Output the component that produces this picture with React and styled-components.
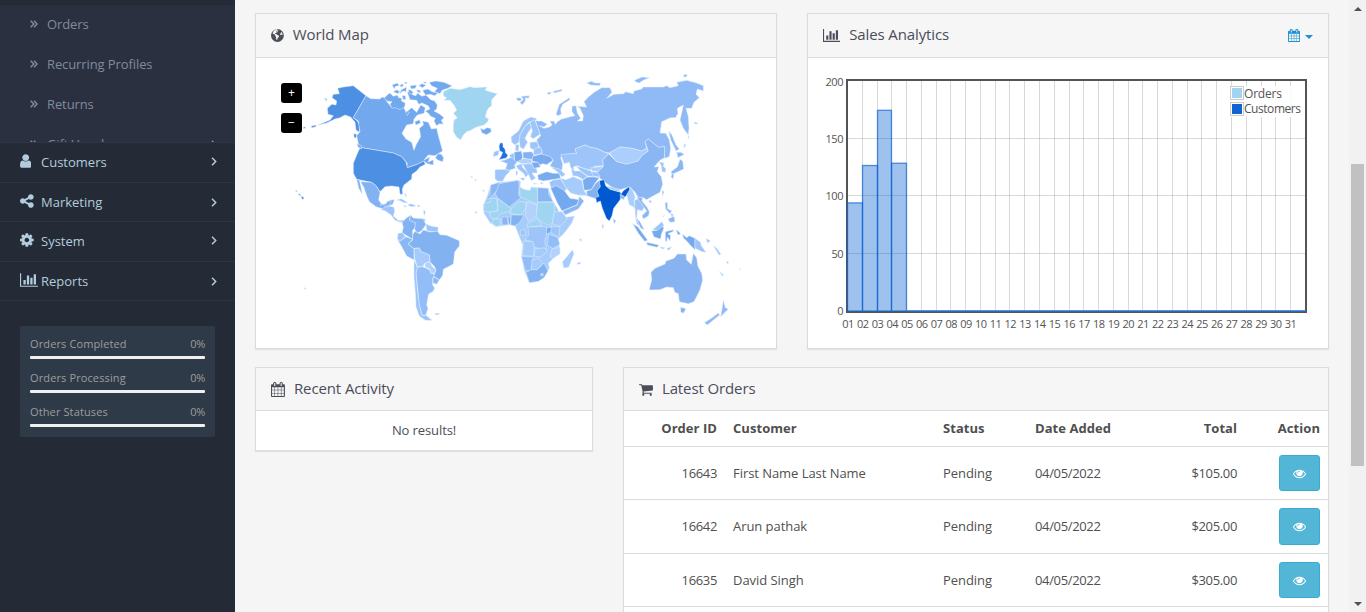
import React from "react";
import styled, { createGlobalStyle } from "styled-components";

const Global = createGlobalStyle`
  * { box-sizing: border-box; }
  html, body { margin: 0; height: 612px; overflow: hidden; }
  body { background: #f5f5f5; color: #4c4d5a; font: 13px/20px "Open Sans", sans-serif; }
`;

/* ---------- icons ---------- */
const PATHS = {
  user: "M1536 1399q0 109-62.5 187t-150.5 78h-854q-88 0-150.5-78t-62.5-187q0-85 8.5-160.5t31.5-152 58.5-131 94-89 134.5-34.5q131 128 313 128t313-128q76 0 134.5 34.5t94 89 58.5 131 31.5 152 8.5 160.5zm-256-887q0 159-112.5 271.5t-271.5 112.5-271.5-112.5-112.5-271.5 112.5-271.5 271.5-112.5 271.5 112.5 112.5 271.5z",
  share: "M1344 1024q133 0 226.5 93.5t93.5 226.5-93.5 226.5-226.5 93.5-226.5-93.5-93.5-226.5q0-12 2-34l-360-180q-92 86-218 86-133 0-226.5-93.5t-93.5-226.5 93.5-226.5 226.5-93.5q126 0 218 86l360-180q-2-22-2-34 0-133 93.5-226.5t226.5-93.5 226.5 93.5 93.5 226.5-93.5 226.5-226.5 93.5q-126 0-218-86l-360 180q2 22 2 34t-2 34l360 180q92-86 218-86z",
  cog: "M1152 896q0-106-75-181t-181-75-181 75-75 181 75 181 181 75 181-75 75-181zm512-109v222q0 12-8 23t-20 13l-185 28q-19 54-39 91 35 50 107 138 10 12 10 25t-9 23q-27 37-99 108t-94 71q-12 0-26-9l-138-108q-44 23-91 38-16 136-29 186-7 28-36 28h-222q-14 0-24.5-8.5t-11.5-21.5l-28-184q-49-16-90-37l-141 107q-10 9-25 9-14 0-25-11-126-114-165-168-7-10-7-23 0-12 8-23 15-21 51-66.5t54-70.5q-27-50-41-99l-183-27q-13-2-21-12.5t-8-23.5v-222q0-12 8-23t19-13l186-28q14-46 39-92-40-57-107-138-10-12-10-24 0-10 9-23 26-36 98.5-107.5t94.5-71.5q13 0 26 10l138 107q44-23 91-38 16-136 29-186 7-28 36-28h222q14 0 24.5 8.5t11.5 21.5l28 184q49 16 90 37l142-107q9-9 24-9 13 0 25 10 129 119 165 170 7 8 7 22 0 12-8 23-15 21-51 66.5t-54 70.5q26 50 41 98l183 28q13 2 21 12.5t8 23.5z",
  chart: "M640 896v512h-256v-512h256zm384-512v1024h-256v-1024h256zm1024 1152v128h-2048v-1536h128v1408h1920zm-640-896v768h-256v-768h256zm384-384v1152h-256v-1152h256z",
  eye: "M1664 960q-152-236-381-353 61 104 61 225 0 185-131.5 316.5t-316.5 131.5-316.5-131.5-131.5-316.5q0-121 61-225-229 117-381 353 133 205 333.5 326.5t434.5 121.5 434.5-121.5 333.5-326.5zm-720-384q0-20-14-34t-34-14q-125 0-214.5 89.5t-89.5 214.5q0 20 14 34t34 14 34-14 14-34q0-86 61-147t147-61q20 0 34-14t14-34zm848 384q0 34-20 69-140 230-376.5 368.5t-499.5 138.5-499.5-139-376.5-368q-20-35-20-69t20-69q140-229 376.5-368t499.5-139 499.5 139 376.5 368q20 35 20 69z",
  cart: "M704 1536q0 52-38 90t-90 38-90-38-38-90 38-90 90-38 90 38 38 90zm896 0q0 52-38 90t-90 38-90-38-38-90 38-90 90-38 90 38 38 90zm128-1088v512q0 24-16.5 42.5t-40.5 21.5l-1044 122q13 60 13 70 0 16-24 64h920q26 0 45 19t19 45-19 45-45 19h-1024q-26 0-45-19t-19-45q0-11 8-31.5t16-36 21.5-40 15.5-29.5l-177-823h-204q-26 0-45-19t-19-45 19-45 45-19h256q16 0 28.5 6.5t19.5 15.5 13 24.5 8 26 5.5 29.5 4.5 26h1201q26 0 45 19t19 45z",
  calendar: "M192 1664h288v-288h-288v288zm352 0h320v-288h-320v288zm-352-352h288v-320h-288v320zm352 0h320v-320h-320v320zm-352-384h288v-288h-288v288zm736 736h320v-288h-320v288zm-384-736h320v-288h-320v288zm768 736h288v-288h-288v288zm-384-352h320v-320h-320v320zm-352-864v-288q0-13-9.5-22.5t-22.5-9.5h-64q-13 0-22.5 9.5t-9.5 22.5v288q0 13 9.5 22.5t22.5 9.5h64q13 0 22.5-9.5t9.5-22.5zm736 864h288v-320h-288v320zm-384-384h320v-288h-320v288zm384 0h288v-288h-288v288zm32-480v-288q0-13-9.5-22.5t-22.5-9.5h-64q-13 0-22.5 9.5t-9.5 22.5v288q0 13 9.5 22.5t22.5 9.5h64q13 0 22.5-9.5t9.5-22.5zm384-64v1280q0 52-38 90t-90 38h-1408q-52 0-90-38t-38-90v-1280q0-52 38-90t90-38h128v-96q0-66 47-113t113-47h64q66 0 113 47t47 113v96h384v-96q0-66 47-113t113-47h64q66 0 113 47t47 113v96h128q52 0 90 38t38 90z",
  globe: "M896 128a768 768 0 1 0 0 1536a768 768 0 1 0 0-1536zM1010 250l-80 70-90-20-100 80 20 60 90-50 110 30-50 90-120 10-50 80-110 20 0 100 130 10 70 90 170 40 90 120-60 130-100 90-40 180-90 40-70-180 10-150-110-130 10-110-110-100-90-20-130-80a650 650 0 0 1 450-490zM1340 480l120 110 60 190-50 70-90-60-70 90-90-70 40-140z",
};
// left edge and width of each glyph on its 1792-unit grid
const BOXES = {
  user: [256, 1280],
  share: [128, 1536],
  cog: [128, 1536],
  globe: [128, 1536],
  calendar: [64, 1664],
  cart: [64, 1664],
  eye: [0, 1792],
  chart: [0, 2048],
};
const IconSvg = styled.svg`
  display: block;
  flex: none;
  fill: currentColor;
`;
const Icon = ({ name, size = 14 }) => {
  const [left, wide] = BOXES[name];
  return (
    <IconSvg viewBox={`${left} 0 ${wide} 1792`} width={(size * wide) / 1792} height={size}>
      <path fillRule="evenodd" d={PATHS[name]} />
    </IconSvg>
  );
};
const Stroke = styled.svg`
  display: block;
  flex: none;
  fill: none;
  stroke: currentColor;
  stroke-width: 1.5;
`;
const Angle = () => <Stroke width="6" height="9"><path d="M1 .8L4.7 4.5 1 8.2" /></Stroke>;
const DoubleAngle = () => <Stroke width="8" height="8"><path d="M.7.8L3.7 4 .7 7.2M4 .8L7 4 4 7.2" /></Stroke>;

/* ---------- sidebar ---------- */
const Page = styled.div`
  display: flex;
  height: 612px;
  overflow: hidden;
`;
const Sidebar = styled.aside`
  width: 235px;
  flex: none;
  padding-top: 5px;
  background: #242b36;
`;
const SubMenu = styled.div`
  height: 138px;
  overflow: hidden;
  background: #2a3040;
  border-bottom: 1px solid #2b3843;
`;
const SubItem = styled.div`
  display: flex;
  align-items: center;
  height: 40px;
  padding: 0 18px 2px 30px;
  color: #808b9c;
  letter-spacing: -0.1px;
`;
const SubLabel = styled.span`
  flex: 1;
  margin-left: 9px;
`;
const MenuItem = styled.div`
  display: flex;
  align-items: center;
  height: ${(p) => p.$h}px;
  padding: 0 18px ${(p) => p.$lift}px 20px;
  border-bottom: 1px solid #2b3843;
  color: #b3cbdd;
`;
const MenuIcon = styled.span`
  width: 21px;
  margin-top: -2px;
`;
const MenuLabel = styled.span`
  flex: 1;
`;
const Stats = styled.div`
  width: 195px;
  height: 111px;
  margin: 25px 20px 0;
  padding: 8px 10px;
  border-radius: 2px;
  background: #2e3a47;
`;
const Stat = styled.div`
  height: 34px;
  color: #9d9d9d;
  font-size: 11px;
  line-height: 20px;
  letter-spacing: 0.12px;
`;
const StatHead = styled.div`
  display: flex;
  justify-content: space-between;
  height: 22px;
`;
const Percent = styled.span`
  letter-spacing: -0.3px;
`;
const StatBar = styled.div`
  height: 3px;
  border-radius: 1px;
  background: #f0f0f0;
`;

/* ---------- content ---------- */
const Main = styled.main`
  flex: 1;
  padding: 13px 20px 0;
`;
const Row = styled.div`
  display: flex;
  align-items: flex-start;
  gap: 30px;
  margin-bottom: 18px;
`;
const Panel = styled.section`
  width: ${(p) => p.$w}px;
  height: ${(p) => p.$h}px;
  flex: none;
  border: 1px solid #dcdcdc;
  background: #fff;
  box-shadow: 0 1px 1px rgba(0, 0, 0, 0.07);
`;
const Heading = styled.header`
  display: flex;
  align-items: center;
  height: ${(p) => p.$h || 43}px;
  padding: 0 15px;
  background: #f6f6f6;
  border-bottom: 1px solid #dcdcdc;
`;
const Title = styled.h3`
  flex: 1;
  margin: 0 0 ${(p) => p.$lift || 2}px 9px;
  font-size: 15px;
  font-weight: 400;
  letter-spacing: -0.11px;
`;
const DateMenu = styled.button`
  display: flex;
  align-items: center;
  gap: 5px;
  padding: 0;
  border: 0;
  background: none;
  color: #1e91cf;
`;
const Caret = styled.i`
  margin-top: 2px;
  border: 4px solid transparent;
  border-top-color: currentColor;
  border-bottom: 0;
`;
const MapBody = styled.div`
  position: relative;
  height: 290px;
`;
const Zoom = styled.div`
  position: absolute;
  left: 25px;
  top: 25px;
  display: grid;
  gap: 10px;
`;
const ZoomButton = styled.button`
  width: 21px;
  height: 20px;
  padding: 0;
  border: 0;
  border-radius: 3px;
  background: #000;
  color: #fff;
  font: 12px/20px "Open Sans", sans-serif;
`;
const Empty = styled.div`
  padding-top: 9px;
  text-align: center;
  letter-spacing: -0.1px;
`;
const Table = styled.div`
  color: #4f4f4f;
`;
const TableRow = styled.div`
  display: grid;
  grid-template-columns: 101px 210px 92px 122px 96px 83px;
  align-items: center;
  height: ${(p) => p.$h}px;
  padding-bottom: ${(p) => p.$lift || 0}px;
  border-bottom: 1px solid #dcdcdc;
  font-weight: ${(p) => (p.$head ? 700 : 400)};
  letter-spacing: ${(p) => (p.$head ? 0.05 : -0.05)}px;
`;
const Cell = styled.div`
  padding: 0 8px;
  display: flex;
  justify-content: ${(p) => (p.$right ? "flex-end" : "flex-start")};
  letter-spacing: ${(p) => (p.$num ? "-0.35px" : "inherit")};
`;
const View = styled.button`
  display: flex;
  align-items: center;
  justify-content: center;
  width: 41px;
  height: ${(p) => p.$h}px;
  padding: 0;
  border: 1px solid #39add1;
  border-radius: 3px;
  background: #54b6d6;
  color: #fff;
`;
const Scrollbar = styled.div`
  display: flex;
  flex-direction: column;
  align-items: center;
  width: 17px;
  flex: none;
  padding: 7px 0 6px;
  background: #f1f1f1;
`;
const Arrow = styled.i`
  border: 4px solid transparent;
  ${(p) => (p.$up ? "border-bottom-color: #505050; border-top: 0;" : "border-top-color: #505050; border-bottom: 0; margin-top: auto;")}
`;
const Thumb = styled.div`
  width: 13px;
  height: 302px;
  margin-top: 153px;
  background: #c1c1c1;
`;

/* ---------- world map ---------- */
// North America, thirds of a pixel from (300, 65)
const NORTH_AMERICA = [
  ["#4d8fe2", "113,70 130,66 160,62 198,92 160,158 172,168 178,180 178,202 168,195 165,172 152,156 135,150 120,158 105,162 80,174 52,181 90,165 100,152 84,148 82,130 95,118 108,120 110,108 96,98 100,88 118,86"],
  ["#72a8ee", "198,92 212,101 240,102 246,96 255,98 262,112 274,126 290,124 298,132 310,125 318,142 335,128 350,142 362,120 376,128 372,145 352,150 342,162 340,176 320,180 306,205 318,222 335,232 342,256 348,240 362,215 358,190 370,180 368,168 385,172 394,192 410,190 416,215 428,258 405,272 385,270 372,285 390,276 384,292 400,284 400,300 382,296 372,288 352,298 320,308 322,295 305,275 280,264 185,248 176,240 170,212 180,200 175,168 160,158"],
  ["#72a8ee", "252,100 264,88 270,84 280,94 292,90 296,98 306,100 304,108 316,114 314,126 300,134 286,128 276,130 270,118 276,110 262,108"],
  ["#72a8ee", "322,82 332,78 338,90 348,92 352,84 366,94 378,90 392,104 404,108 412,120 410,132 402,138 420,148 432,158 424,166 430,178 418,176 410,182 402,168 406,160 392,154 386,146 376,138 390,132 384,122 366,114 356,118 350,106 330,104"],
  ["#72a8ee", "388,52 408,48 432,52 456,62 444,70 426,76 420,86 404,80 412,70 394,62"],
  ["#72a8ee", "368,76 384,72 396,80 414,84 404,92 390,88 376,90"],
  ["#72a8ee", "276,60 292,54 298,62 286,64 284,72"], ["#72a8ee", "280,80 290,74 300,80 292,86"],
  ["#72a8ee", "304,74 320,66 318,80 308,78 298,88"], ["#72a8ee", "300,60 308,56 310,64 302,66"],
  ["#72a8ee", "330,62 350,60 346,70 334,72"], ["#72a8ee", "324,74 334,76 340,84 330,88"], ["#72a8ee", "356,62 366,56 378,60 368,68"],
  ["#72a8ee", "314,52 322,52 320,56 314,56"], ["#72a8ee", "370,50 380,52 376,56"], ["#72a8ee", "350,74 360,76 362,84 352,80"],
  ["#72a8ee", "306,92 316,92 318,102 310,104"], ["#72a8ee", "344,170 358,164 362,174 348,180"], ["#72a8ee", "316,138 328,142 322,152"],
  ["#72a8ee", "406,278 414,266 424,268 431,278 428,290 414,286"],
  ["#4d8fe2", "178,252 185,248 280,264 305,275 318,292 322,308 352,298 372,288 376,298 360,306 350,318 336,328 335,342 312,360 307,372 308,388 300,388 297,366 275,363 255,365 240,380 228,362 215,352 170,343 160,325 160,295 170,270"],
  ["#4d8fe2", "3,394 10,395 12,402 6,403"], ["#4d8fe2", "-14,378 -10,376 -8,380"], ["#4d8fe2", "-5,386 1,388 1,393 -3,391"], ["#4d8fe2", "72,99 80,102 81,109"],
  ["#4d8fe2", "34,183 48,180 48,185 35,188"], ["#4d8fe2", "10,186 16,186 16,190 10,190"],
  ["#4d8fe2", "161,206 170,208 168,220 162,216"], ["#72a8ee", "170,236 184,242 184,252 174,246"],
  ["#83b2f2", "170,343 178,345 182,362 187,388 176,370"],
  ["#83b2f2", "182,350 215,352 228,362 240,382 236,405 245,418 262,416 270,405 283,404 278,418 262,425 250,432 228,425 208,410 200,392 192,368"],
  ["#9fd5f1", "430,80 450,70 480,74 510,65 525,68 560,66 556,76 570,80 592,86 575,104 575,122 565,130 560,140 556,156 566,162 563,170 552,180 530,186 512,196 500,200 490,210 482,225 470,217 460,200 460,180 462,165 472,158 460,145 470,136 462,120 450,106 432,106 440,98 430,92"],
  ["#74a9ee", "541,190 552,194 560,188 572,190 574,200 560,209 546,204"],
];
// South America, thirds of a pixel from (380, 190)
const SOUTH_AMERICA = [
  ["#83b2f2", "0,45 12,44 16,50 28,46 34,32 22,34 18,42 4,42"],
  ["#9dc4fa", "14,52 28,48 42,52 44,64 40,78 56,92 70,90 76,96 58,96 44,90 34,76 18,64 2,58"],
  ["#9dc4fa", "50,30 64,26 84,38 72,38 60,32"], ["#9dc4fa", "86,42 96,42 108,48 98,50 86,48"],
  ["#9dc4fa", "70,46 79,48 76,52"], ["#9dc4fa", "112,46 119,46 119,50 113,50"], ["#9dc4fa", "131,60 136,64 134,76 131,72"], ["#9dc4fa", "130,87 136,87 136,93 131,93"],
  ["#9dc4fa", "74,10 78,12 80,20 77,20"],
  ["#83b2f2", "78,85 92,75 88,90 108,98 104,115 98,120 98,148 82,138 66,128 70,112 66,98"],
  ["#88b6f4", "92,75 100,84 130,86 138,104 125,122 112,130 104,118 106,98 88,92"],
  ["#9dc4fa", "138,102 152,108 175,112 173,126 150,124 140,122"],
  ["#83b2f0", "98,135 104,124 120,132 130,120 150,126 173,124 180,134 200,136 238,152 238,168 224,186 220,222 205,230 190,238 188,256 178,270 160,258 168,242 164,230 150,215 148,195 122,184 118,174 100,175 84,162 98,150"],
  ["#9dc4fa", "54,130 68,128 76,140 60,154 52,146"],
  ["#8ab8f5", "52,148 60,154 78,140 98,148 84,162 102,176 102,210 80,198 66,172"],
  ["#a6cafb", "102,176 118,174 122,184 148,195 150,214 134,220 128,230 112,230 104,206"],
  ["#b2d2fc", "134,220 150,215 156,228 168,240 164,250 152,250 150,238 136,232"],
  ["#8ab8f5", "160,260 178,270 170,283 158,278"],
  ["#92bdf8", "112,232 128,230 150,240 152,250 164,252 158,266 158,285 164,294 160,304 146,312 144,322 140,345 144,355 138,375 126,375 118,345 112,290 108,250"],
  ["#9dc4fa", "102,210 112,232 108,250 112,300 118,345 126,376 138,376 156,391 136,391 118,378 108,350 107,320 102,260"],
  ["#9dc4fa", "165,370 178,370 176,374 166,374"],
];
// Eastern hemisphere, thirds of a pixel from (470, 65)
const EAST = [
  ["#8fbaf5", "197,168 215,168 232,178 222,186 208,182 222,190 238,186 246,180 240,168 252,168 256,178 262,170 275,162 290,158 300,155 315,152 306,140 306,124 318,122 322,144 332,160 322,168 338,168 340,152 330,130 322,124 350,126 342,110 355,96 375,80 395,68 420,68 426,82 410,100 432,88 462,86 466,80 490,86 492,78 515,72 520,66 580,66 590,62 600,68 625,62 620,52 650,46 680,54 700,62 700,78 682,72 678,88 688,98 672,112 665,130 648,130 655,155 657,190 655,210 640,190 630,165 636,140 640,120 622,130 624,146 616,158 602,158 575,170 570,204 588,205 598,225 602,250 598,275 583,280 584,245 565,247 535,222 525,230 530,250 515,258 485,250 450,246 418,264 405,262 380,250 365,248 345,240 315,252 320,265 280,270 272,278 278,296 276,316 262,314 240,302 250,285 240,275 215,268 216,256 205,240 200,225 212,212 204,190"],
  ["#8fbaf5", "258,148 268,118 298,98 300,104 278,118 272,132 274,148 264,152"],
  ["#8fbaf5", "138,100 150,98 156,104 148,108 142,106"], ["#8fbaf5", "154,94 178,92 176,100 166,98 166,108 156,120 150,112 160,104"],
  ["#8fbaf5", "232,82 244,82 240,88 234,88"],
  ["#8fbaf5", "250,79 276,73 276,78 252,84"], ["#8fbaf5", "350,54 364,49 376,54 392,54 388,62 362,60"],
  ["#8fbaf5", "493,46 516,36 538,38 520,46 508,54 500,52"], ["#8fbaf5", "640,30 651,28 651,34 642,37"],
  ["#8fbaf5", "596,198 606,210 618,240 628,252 618,258 602,224"], ["#8fbaf5", "672,172 682,173 682,177 674,176"],
  ["#8fbaf5", "654,212 657,216 654,222"], ["#8fbaf5", "644,236 648,240 640,250"],
  ["#9ec5fa", "272,268 320,265 315,252 345,240 365,248 380,250 405,262 416,266 398,285 400,302 375,304 362,315 340,310 322,302 310,306 314,318 302,308 298,292 282,296"],
  ["#aacffc", "418,264 450,246 485,250 515,258 530,250 535,258 515,272 505,288 470,298 440,290"],
  ["#8ab6f3", "416,266 440,290 470,298 505,288 515,272 535,258 525,230 535,222 565,247 584,245 583,278 570,286 552,306 566,305 562,320 574,335 578,358 570,382 545,395 530,404 520,398 505,398 494,380 478,366 450,374 430,370 405,352 390,340 376,326 400,304 398,285"],
  ["#9ec5fa", "568,290 582,294 580,304 588,312 586,322 576,320 574,304"],
  ["#8ab6f3", "630,283 638,288 641,312 624,320 606,328 603,320 622,306"], ["#8ab6f3", "620,262 632,262 643,268 624,278"], ["#8ab6f3", "606,326 612,328 609,342 603,336"],
  ["#8ab6f3", "576,376 582,380 578,394"], ["#8ab6f3", "536,406 545,408 540,415"],
  ["#9ec5fa", "304,310 314,318 330,318 352,334 340,344 322,334 308,332"],
  ["#9ec5fa", "318,304 340,310 362,318 380,330 370,336 352,332 332,318"],
  ["#aacffc", "362,308 400,304 384,320 366,318"], ["#9ec5fa", "364,320 384,322 390,336 370,334"],
  ["#78abef", "338,346 352,336 372,336 388,338 374,356 364,374 342,376"],
  ["#83b2f2", "350,378 364,374 376,356 388,346 392,365 382,378 388,394 380,402 350,392"],
  ["#a6ccfb", "272,340 288,344 310,335 336,346 342,376 352,392 322,390 302,384 286,366"],
  ["#9ec5fa", "242,306 268,312 286,328 276,336 262,320"],
  ["#78abef", "203,330 230,320 250,325 268,325 272,340 240,345 220,348 205,344"],
  ["#9ec5fa", "238,352 250,345 272,342 290,372 282,380 258,364 244,372"],
  ["#74a9ee", "242,370 258,362 282,376 300,400 328,404 320,420 285,434 276,438 262,414"],
  ["#8ab6f3", "278,438 322,420 328,394 342,408 325,432 285,450"],
  ["#0059d1", "388,347 402,344 407,362 420,373 450,381 454,386 460,377 477,365 481,376 465,397 456,390 450,405 431,430 426,453 418,468 409,460 397,430 391,408 380,413 377,398 387,394 381,378 391,365"],
  ["#a6ccfb", "408,362 450,374 448,380 420,372"], ["#8ab6f3", "450,386 464,396 462,404 452,400"],
  ["#8ab6f3", "430,460 438,468 432,476"],
  ["#aacffc", "470,390 482,368 490,380 496,398 492,408 500,440 490,425 478,420"],
  ["#9ec5fa", "494,406 508,400 524,426 516,438 502,434 500,462 508,482 500,476 496,452"],
  ["#8ab6f3", "500,396 518,398 516,408 532,428 538,440 536,452 520,462 516,452 530,438 512,412"],
  ["#74a9ee", "488,476 504,486 533,526 524,529 506,506"], ["#8ab6f3", "498,458 510,470 523,494 512,490"],
  ["#74a9ee", "530,532 566,540 562,547 532,540"], ["#9ec5fa", "570,545 584,548 578,553"], ["#9ec5fa", "590,550 606,546 596,556"],
  ["#74a9ee", "545,498 560,496 574,482 582,488 574,508 572,522 552,516"], ["#9ec5fa", "548,494 576,470 582,482 562,496"],
  ["#74a9ee", "586,500 610,494 610,499 594,506 602,512 600,528 592,516 590,530 586,528"],
  ["#74a9ee", "618,494 624,498 632,506 624,510"], ["#8ab6f3", "585,412 593,414 592,430 600,436 606,436 600,446 587,432"], ["#8ab6f3", "594,462 612,454 615,470 600,472"],
  ["#8ab6f3", "602,446 610,448 606,456"], ["#8ab6f3", "584,448 580,456 578,456"],
  ["#74a9ee", "638,508 650,518 658,512 675,520 675,554 664,544 652,530 640,518"],
  ["#9ec5fa", "675,520 692,532 694,542 708,562 696,560 675,550"], ["#9ec5fa", "708,520 722,528 712,534"], ["#9ec5fa", "730,542 740,550 753,568 747,570"],
  ["#9fd5f1", "748,619 761,630 757,634"], ["#9ec5fa", "768,588 776,592 773,597"], ["#9ec5fa", "808,611 812,611 812,616"],
  ["#87b4f1", "540,675 538,672 545,645 543,622 555,610 585,597 588,588 612,580 622,567 648,567 650,585 664,598 670,565 680,578 684,604 695,625 698,645 690,675 672,710 655,716 628,710 625,686 614,682 610,668 590,666 570,674"],
  ["#87b4f1", "632,727 648,731 640,745 632,741"],
  ["#8fbaf5", "760,705 766,728 775,732 752,755 756,732"], ["#8fbaf5", "745,744 749,750 728,767 712,780 703,773 725,759"],
  ["#9ec5fa", "123,216 146,197 160,168 182,156 198,160 200,166 176,172 164,186 150,210 148,230 135,240 125,232"],
  ["#9ec5fa", "150,210 165,184 180,172 184,188 173,205 165,220 173,232 160,253 150,246 148,226"],
  ["#9ec5fa", "180,172 194,164 204,190 210,208 190,221 181,215 187,198"],
  ["#9ec5fa", "137,239 147,239 146,258 136,257"],
  ["#1f6fdc", "91,233 99,235 99,246 105,252 107,264 114,270 109,279 87,284 94,272 98,262 89,258 87,244"],
  ["#9ec5fa", "72,261 87,255 85,271 69,275"],
  ["#8fbaf5", "104,285 128,275 142,290 134,300 136,310 118,316 106,312 112,296 91,288"],
  ["#9ec5fa", "75,314 108,313 121,318 107,332 98,349 84,349 75,342"],
  ["#78abef", "132,262 154,258 158,276 152,292 134,288"], ["#9ec5fa", "118,270 132,264 134,284 120,276"],
  ["#83b2f2", "158,262 186,260 192,272 186,284 160,280"],
  ["#78abef", "188,274 214,267 240,274 249,286 230,299 218,296 210,300 200,292 186,288"],
  ["#9ec5fa", "192,250 210,246 218,262 208,268 190,270"], ["#9ec5fa", "180,232 202,230 206,246 190,254 180,248"],
  ["#9ec5fa", "138,302 156,296 157,307 177,326 167,337 162,326 144,312"],
  ["#b2d2fc", "142,290 162,280 186,284 184,296 156,296"],
  ["#9ec5fa", "158,298 184,296 200,312 202,324 186,324 197,340 184,347 172,322"],
  ["#78abef", "184,292 204,292 212,306 192,310"], ["#9ec5fa", "149,339 165,339 160,347"], ["#9ec5fa", "138,318 143,318 142,330 138,330"],
  ["#9ec5fa", "210,354 220,352 216,358"], ["#9ec5fa", "190,354 202,356 194,358"],
  // Africa
  ["#a6ccfb", "62,360 88,352 145,346 152,350 150,365 165,375 180,376 184,366 235,370 248,408 262,430 275,458 314,453 305,475 285,502 265,522 270,565 250,580 235,595 238,610 218,640 205,649 178,653 162,615 155,570 158,540 142,500 136,484 120,479 78,485 60,473 42,445 40,420 50,398"],
  ["#8ab6f3", "62,360 88,352 90,368 74,384 58,400 48,402 60,388"],
  ["#8ab6f3", "88,356 145,346 148,362 146,388 152,398 118,426 82,398 76,386"],
  ["#9fd5f1", "147,366 165,374 180,376 184,366 202,370 203,418 150,396"],
  ["#8ab6f3", "203,368 235,370 236,388 250,410 203,411"],
  ["#9fd5f1", "42,415 60,412 62,400 80,400 84,438 58,442 40,436"],
  ["#9fd5f1", "82,400 124,430 118,440 92,446 78,462 62,458 58,442 84,438"],
  ["#9fd5f1", "124,430 148,408 168,412 168,428 154,450 120,446"],
  ["#b2d2fc", "170,410 202,420 200,454 174,470 166,448"],
  ["#9fd5f1", "203,412 252,412 254,442 244,484 220,474 198,456"],
  ["#83b2f2", "124,450 162,450 148,474 134,482 122,480"], ["#9fd5f1", "72,462 92,462 92,482 78,484 66,474"],
  ["#78abef", "114,460 122,454 120,478 116,478"], ["#8ab6f3", "96,456 112,456 114,479 96,480"],
  ["#9fd5f1", "170,478 202,460 216,480 196,484 172,488"],
  ["#9ec5fa", "174,486 228,484 232,500 224,530 230,550 210,552 192,546 188,530 164,524 176,510"],
  ["#9ec5fa", "150,498 164,492 168,510 152,512"],
  ["#a6ccfb", "160,528 188,530 194,548 190,574 158,572"], ["#a6ccfb", "194,552 224,548 232,558 214,576 194,574"],
  ["#92bdf8", "154,574 190,576 184,616 166,618"], ["#a6ccfb", "186,584 206,580 220,594 202,614 184,614"],
  ["#83b2f2", "168,622 184,614 202,614 222,594 234,618 222,638 205,649 178,653"],
  ["#b2d2fc", "211,628 217,624 221,630 215,634"],
  ["#a6ccfb", "254,440 276,440 292,462 270,484 246,476"], ["#9ec5fa", "246,484 270,486 266,518 240,500"],
  ["#78abef", "230,488 246,488 240,504 230,506"], ["#92bdf8", "236,508 262,516 270,538 248,550 232,540"],
  ["#b2d2fc", "246,552 270,546 270,566 250,580 240,576"],
  ["#a6ccfb", "307,554 312,566 296,607 281,609 277,590 290,576"],
  ["#9fd5f1", "327,524 334,520 334,530"], ["#9ec5fa", "320,597 326,592 334,592 328,598"], ["#9ec5fa", "396,479 400,479 401,489 397,489"],
  ["#9ec5fa", "2,333 8,336 6,340"], ["#9ec5fa", "14,342 20,345 15,348"], ["#9ec5fa", "37,376 44,376 42,381"], ["#9ec5fa", "15,437 21,443 17,447"],
  ["#9ec5fa", "-498,667 -491,672 -496,673"],
];
const Land = ({ x, y, shapes }) => (
  <g transform={`translate(${x} ${y}) scale(.33333)`} stroke="#e2effd" strokeWidth="1.5" strokeLinejoin="round">
    {shapes.map(([fill, points], i) => <polygon key={i} fill={fill} points={points} />)}
  </g>
);
const WorldMap = () => (
  <svg width="520" height="290" viewBox="256 58 520 290">
    <Land x={300} y={65} shapes={NORTH_AMERICA} />
    <Land x={380} y={190} shapes={SOUTH_AMERICA} />
    <Land x={470} y={65} shapes={EAST} />
  </svg>
);

/* ---------- sales chart ---------- */
const ChartText = styled.text`
  font: 11px "Open Sans", sans-serif;
  fill: #545454;
`;
const LegendText = styled(ChartText)`
  font-size: 12px;
`;
const VALUES = [94, 126.5, 174.5, 128.5];
const tick = (i) => Math.round(847 + i * 14.77) + 0.5;
const level = (v) => Math.round(311 - v * 1.15) - 0.5;
const SalesChart = () => (
  <svg width="520" height="290" viewBox="808 58 520 290">
    <g stroke="#545454" strokeOpacity=".22">
      {Array.from({ length: 30 }, (_, i) => <path key={i} d={`M${tick(i + 1)} 81V311`} />)}
      {[50, 100, 150].map((v) => <path key={v} d={`M848 ${level(v)}H1306`} />)}
    </g>
    <rect x="847" y="80" width="459" height="232" fill="none" stroke="#545454" strokeWidth="2" />
    {VALUES.map((v, i) => (
      <rect key={i} x={tick(i)} y={311 - v * 1.15} width={tick(i + 1) - tick(i)} height={v * 1.15} fill="#1065d2" fillOpacity=".4" stroke="#1065d2" strokeOpacity=".7" strokeWidth="1.3" />
    ))}
    <path d="M907 311H1306" stroke="#1f6fd6" strokeOpacity=".75" strokeWidth="2" />
    {[0, 50, 100, 150, 200].map((v) => (
      <ChartText key={v} x="843.5" y={level(v) + (v === 200 ? 5.5 : 4.5)} textAnchor="end" textLength={String(v).length * 6}>{v}</ChartText>
    ))}
    {Array.from({ length: 31 }, (_, i) => (
      <ChartText key={i} x={848.3 + i * 14.75} y="328" textAnchor="middle" textLength="12">{String(i + 1).padStart(2, "0")}</ChartText>
    ))}
    <rect x="1230" y="86" width="74" height="31" fill="#fff" fillOpacity=".85" />
    <rect x="1230.5" y="86.5" width="13" height="13" fill="#fff" stroke="#ccc" />
    <rect x="1232" y="88" width="10" height="10" fill="#9fd5f1" />
    <rect x="1230.5" y="102.5" width="13" height="13" fill="#fff" stroke="#ccc" />
    <rect x="1232" y="104" width="10" height="10" fill="#1065d2" />
    <LegendText x="1244" y="98" textLength="38">Orders</LegendText>
    <LegendText x="1244" y="113" textLength="57">Customers</LegendText>
  </svg>
);

const MENU = [
  ["user", "Customers", 40, 2],
  ["share", "Marketing", 39, 0],
  ["cog", "System", 40, 2],
  ["chart", "Reports", 39, 0],
];
const ORDERS = [
  ["16643", "First Name Last Name", "$105.00", 53, 0, 36],
  ["16642", "Arun pathak", "$205.00", 54, 1, 37],
  ["16635", "David Singh", "$305.00", 53, 0, 36],
];

export default function App() {
  return (
    <Page>
      <Global />
      <Sidebar>
        <SubMenu>
          {["Orders", "Recurring Profiles", "Returns", "Gift Vouchers"].map((t, i) => (
            <SubItem key={t}>
              <DoubleAngle />
              <SubLabel>{t}</SubLabel>
              {i === 3 && <Angle />}
            </SubItem>
          ))}
        </SubMenu>
        {MENU.map(([icon, label, h, lift]) => (
          <MenuItem key={label} $h={h} $lift={lift}>
            <MenuIcon><Icon name={icon} size={16} /></MenuIcon>
            <MenuLabel>{label}</MenuLabel>
            <Angle />
          </MenuItem>
        ))}
        <Stats>
          {["Orders Completed", "Orders Processing", "Other Statuses"].map((t) => (
            <Stat key={t}>
              <StatHead><span>{t}</span><Percent>0%</Percent></StatHead>
              <StatBar />
            </Stat>
          ))}
        </Stats>
      </Sidebar>
      <Main>
        <Row>
          <Panel $w={522} $h={336}>
            <Heading $h={44}><Icon name="globe" size={15} /><Title $lift={4}>World Map</Title></Heading>
            <MapBody>
              <WorldMap />
              <Zoom><ZoomButton>+</ZoomButton><ZoomButton>−</ZoomButton></Zoom>
            </MapBody>
          </Panel>
          <Panel $w={522} $h={336}>
            <Heading $h={44}>
              <Icon name="chart" size={15} />
              <Title $lift={4}>Sales Analytics</Title>
              <DateMenu><Icon name="calendar" size={13} /><Caret /></DateMenu>
            </Heading>
            <SalesChart />
          </Panel>
        </Row>
        <Row>
          <Panel $w={338} $h={84}>
            <Heading><Icon name="calendar" size={15} /><Title>Recent Activity</Title></Heading>
            <Empty>No results!</Empty>
          </Panel>
          <Panel $w={706} $h={300}>
            <Heading><Icon name="cart" size={15} /><Title>Latest Orders</Title></Heading>
            <Table>
              <TableRow $head $h={36} $lift={2}>
                <Cell $right>Order ID</Cell><Cell>Customer</Cell><Cell>Status</Cell><Cell>Date Added</Cell><Cell $right>Total</Cell><Cell $right>Action</Cell>
              </TableRow>
              {ORDERS.map(([id, name, total, h, lift, btn]) => (
                <TableRow key={id} $h={h} $lift={lift}>
                  <Cell $right $num>{id}</Cell><Cell>{name}</Cell><Cell>Pending</Cell><Cell $num>04/05/2022</Cell><Cell $right $num>{total}</Cell>
                  <Cell $right><View $h={btn}><Icon name="eye" size={13} /></View></Cell>
                </TableRow>
              ))}
            </Table>
          </Panel>
        </Row>
      </Main>
      <Scrollbar><Arrow $up /><Thumb /><Arrow /></Scrollbar>
    </Page>
  );
}
